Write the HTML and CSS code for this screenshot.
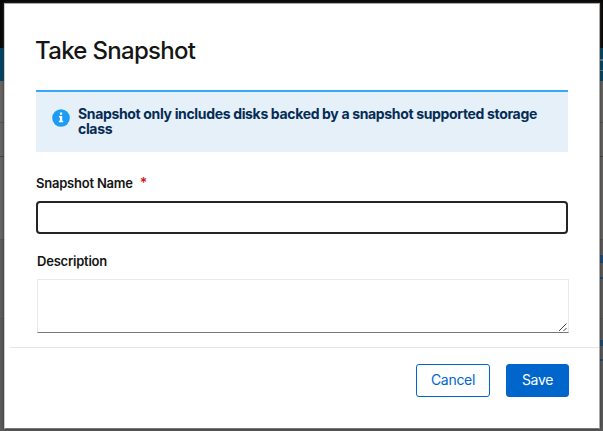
FILE: index.html
```
<!DOCTYPE html>
<html lang="en">
<head>
<meta charset="utf-8">
<title>Take Snapshot</title>
<link rel="stylesheet" href="styles.css">
</head>
<body>
<div class="page" aria-hidden="true">
  <div class="masthead"></div>
  <div class="banner"><i class="banner-link"></i></div>
  <div class="row row-tabs"></div>
  <div class="row row-toolbar"></div>
  <div class="row row-list"></div>
  <div class="row row-item"><i class="item-link"></i></div>
  <div class="row row-last"><i class="last-link"></i></div>
</div>
<div class="modal" role="dialog" aria-labelledby="title">
  <div class="content">
    <h1 class="title" id="title">Take Snapshot</h1>
    <div class="alert">
      <svg class="info" viewBox="0 0 18 18"><circle cx="9" cy="9" r="8.8" fill="#1c9cf2"/><path d="M7.9 3.6h2.3v2.1H7.9zM6.9 7.1h3.3v4.6h1v1.5H6.9v-1.5h1V8.6h-1z" fill="#fff"/></svg>
      <p class="alert-text">Snapshot only includes disks backed by a snapshot supported storage<br>class</p>
    </div>
    <label class="label" for="name">Snapshot Name<span class="required">*</span></label>
    <input class="name" id="name" type="text">
    <label class="label description-label" for="description">Description</label>
    <div class="area">
      <textarea class="description" id="description"></textarea>
      <svg class="grip" viewBox="0 0 10 10"><path d="M1 9 8.5 1.5M5.5 9l3-3" fill="none" stroke="#444" stroke-width="1"/></svg>
    </div>
  </div>
  <div class="footer">
    <button class="button cancel" type="button">Cancel</button>
    <button class="button save" type="button">Save</button>
  </div>
</div>
</body>
</html>
```
FILE: styles.css
```
* { box-sizing: border-box; }
body {
  margin: 0;
  width: 603px;
  height: 431px;
  overflow: hidden;
  font-family: Inter, "Liberation Sans", sans-serif;
  color: #151515;
}
.page { height: 431px; background: #666563; display: flex; flex-direction: column; }
.masthead { height: 48px; background: #080706; }
.banner { height: 33px; background: #004466; display: flex; justify-content: flex-end; align-items: center; }
.banner-link { width: 3px; height: 12px; border-top: 2px solid #71858f; border-bottom: 1px solid #71858f; }
.row { border-bottom: 1px solid #555452; display: flex; justify-content: flex-end; }
.row-tabs { height: 42px; }
.row-toolbar { height: 34px; border-color: #454443; }
.row-list { height: 83px; }
.row-item { height: 79px; background: #5e5d5b; padding-top: 15px; }
.item-link { width: 4px; height: 24px; border-top: 8px solid #174a77; border-bottom: 2px solid #174a77; }
.row-last { flex: 1; background: #5b5b5b; border: 0; padding-top: 21px; }
.last-link { width: 3px; height: 21px; border-top: 6px solid #174a77; border-bottom: 2px solid #174a77; }
.modal {
  position: absolute;
  inset: 3px 3px 2px 4px;
  background: #fff;
  border: 1px solid #aaa;
  border-left-color: #ccc;
  border-bottom-color: #777;
  box-shadow: 0 0 3px #333;
}
.content { height: 343px; padding: 33px 31px 0 31px; }
.title { margin: 0; height: 53px; font-size: 24px; line-height: 28px; font-weight: 500; letter-spacing: -.7px; text-indent: -1px; }
.alert { width: 532px; height: 62px; border-top: 2px solid #36a8f7; background: #e5f0f9; display: flex; padding: 17px 16px 0; }
.info { width: 18px; height: 18px; flex: none; }
.alert-text { margin: -3px 0 0 8px; font-size: 14px; line-height: 15px; font-weight: 700; letter-spacing: -.34px; color: #052c55; white-space: nowrap; }
.label { display: flex; height: 20px; margin-top: 21px; font-size: 13px; line-height: 20px; font-weight: 600; letter-spacing: -.22px; }
.required { color: #d11515; margin-left: 7px; font-size: 14px; }
.name { display: block; width: 532px; height: 33px; margin-top: 8px; border: 2px solid #242426; border-radius: 4px; background: #fff; outline: 0; }
.description-label { margin-top: 17px; padding-left: 1px; }
.area { position: relative; width: 532px; height: 54px; margin: 8px 0 0 1px; }
.description { display: block; width: 532px; height: 54px; border: 1px solid #e9e9e9; border-bottom-color: #78787c; resize: none; outline: 0; background: #fff; }
.grip { position: absolute; right: 1px; bottom: 1px; width: 10px; height: 10px; }
.footer { display: flex; justify-content: flex-end; gap: 16px; padding: 16px 30px 0 0; border-top: 1px solid #e5e5e5; margin-left: 5px; }
.button { height: 33px; padding: 0 0 2px; border: 1px solid #0066cc; border-radius: 3px; font: 400 14px/29px Inter, "Liberation Sans", sans-serif; letter-spacing: -.3px; }
.cancel { width: 74px; background: #fff; color: #0066cc; }
.save { width: 63px; background: #0066cc; color: #fff; }
```
